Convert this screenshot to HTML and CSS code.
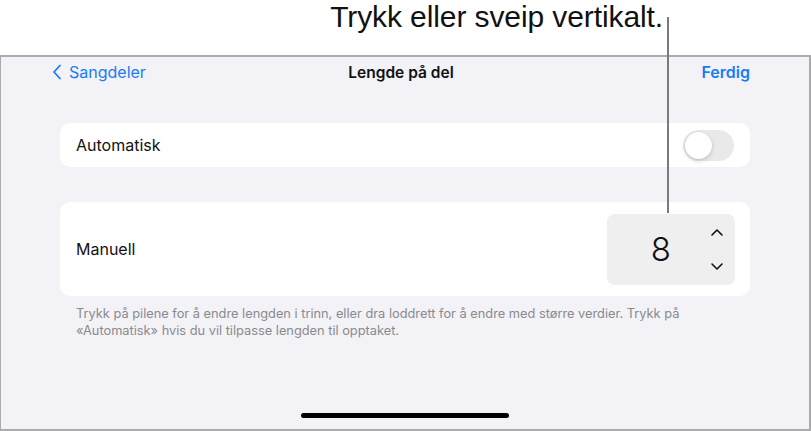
FILE: index.html
```html
<!DOCTYPE html>
<html lang="no">
<head>
<meta charset="utf-8">
<link rel="stylesheet" href="styles.css">
</head>
<body>
<div class="page">
  <div class="callout">
    <span class="callout-text">Trykk eller sveip vertikalt.</span>
  </div>
  <div class="callout-line"></div>
  <div class="screen">
    <div class="nav">
      <div class="nav-back">
        <svg class="chev" width="10" height="16" viewBox="0 0 10 16"><path d="M8 1.5 L2 8 L8 14.5" fill="none" stroke="#1a7cf5" stroke-width="1.8" stroke-linecap="round" stroke-linejoin="round"/></svg>
        <span>Sangdeler</span>
      </div>
      <div class="nav-title">Lengde på del</div>
      <div class="nav-done">Ferdig</div>
    </div>
    <div class="content">
      <div class="card card-auto">
        <span class="label">Automatisk</span>
        <div class="toggle"><div class="knob"></div></div>
      </div>
      <div class="card card-manual">
        <span class="label">Manuell</span>
        <div class="stepper">
          <span class="value">8</span>
          <div class="arrows">
            <svg width="14" height="9" viewBox="0 0 14 9"><path d="M2 7 L7 2 L12 7" fill="none" stroke="#111" stroke-width="1.6" stroke-linecap="round" stroke-linejoin="round"/></svg>
            <svg width="14" height="9" viewBox="0 0 14 9"><path d="M2 2 L7 7 L12 2" fill="none" stroke="#111" stroke-width="1.6" stroke-linecap="round" stroke-linejoin="round"/></svg>
          </div>
        </div>
      </div>
      <p class="footnote">Trykk på pilene for å endre lengden i trinn, eller dra loddrett for å endre med større verdier. Trykk på «Automatisk» hvis du vil tilpasse lengden til opptaket.</p>
    </div>
    <div class="home"><div class="home-bar"></div></div>
  </div>
</div>
</body>
</html>
```

FILE: styles.css
```css
* { box-sizing: border-box; }
html, body { margin: 0; padding: 0; background: #fff; }
body { width: 811px; height: 431px; overflow: hidden; font-family: Inter, "Noto Sans", sans-serif; }
.page { position: relative; width: 811px; height: 431px; display: flex; flex-direction: column; }
.callout { height: 55px; display: flex; justify-content: flex-end; padding-right: 148px; }
.callout-text { font-family: "Liberation Sans", Arial, sans-serif; font-size: 30px; color: #111; line-height: 1; margin-top: 2px; letter-spacing: -0.1px; }
.callout-line { position: absolute; left: 667px; top: 17px; width: 2px; height: 196px; background: #7a7a7a; z-index: 2; }
.screen { flex: 1; background: #f2f2f7; border: 2px solid #ababab; border-left-width: 1px; display: flex; flex-direction: column; }
.nav { height: 30px; display: grid; grid-template-columns: 1fr auto 1fr; align-items: center; padding: 0 59px 0 51px; font-size: 16px; }
.nav-back { display: flex; align-items: center; gap: 7px; color: #1a7cf5; }
.nav-title { font-weight: 600; color: #111; font-size: 15.5px; }
.nav-done { justify-self: end; color: #1a7cf5; font-weight: 600; }
.content { padding: 36px 59px 0 59px; display: flex; flex-direction: column; }
.card { background: #fff; border-radius: 10px; display: flex; align-items: center; justify-content: space-between; padding-left: 16px; }
.card-auto { height: 44px; padding-right: 16px; }
.card-manual { height: 94px; margin-top: 35px; padding-right: 15px; }
.label { font-size: 16px; color: #111; }
.toggle { width: 51px; height: 31px; border-radius: 16px; background: #e9e9ea; padding: 2px; display: flex; }
.knob { width: 27px; height: 27px; border-radius: 50%; background: #fff; box-shadow: 0 2px 4px rgba(0,0,0,0.15), 0 0 0 0.5px rgba(0,0,0,0.06); }
.stepper { width: 128px; height: 71px; background: #efeff0; border-radius: 8px; display: flex; align-items: center; justify-content: flex-end; padding-right: 11px; }
.value { font-size: 33px; color: #111; margin-right: 39px; font-weight: 300; }
.arrows { display: flex; flex-direction: column; gap: 25px; }
.arrows svg { display: block; }
.footnote { margin: 9px 0 0 16px; font-size: 12.8px; line-height: 17px; color: #8a8a8e; max-width: 650px; }
.home { margin-top: auto; height: 16px; display: flex; justify-content: center; }
.home-bar { width: 208px; height: 5px; border-radius: 3px; background: #000; }
```
